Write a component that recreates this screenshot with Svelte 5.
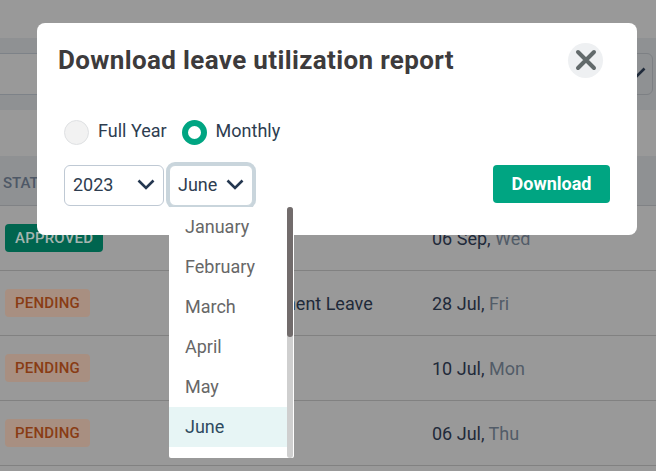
<script>
  const rows = [
    { status: 'APPROVED', cls: 'ok', type: '', date: '06 Sep,', day: 'Wed' },
    { status: 'PENDING', cls: 'wait', type: 'Bereavement Leave', date: '28 Jul,', day: 'Fri' },
    { status: 'PENDING', cls: 'wait', type: '', date: '10 Jul,', day: 'Mon' },
    { status: 'PENDING', cls: 'wait', type: '', date: '06 Jul,', day: 'Thu' }
  ];
  const months = ['January', 'February', 'March', 'April', 'May', 'June'];
</script>

<div class="page">
  <div class="band">
    <div class="search"></div>
    <div class="filter-select">
      <svg width="18" height="11" viewBox="0 0 18 11"><path d="M1.5 1.5L9 9l7.5-7.5" /></svg>
    </div>
  </div>
  <div class="thead"><span>STATUS</span></div>
  {#each rows as r}
    <div class="row">
      <span class="chip {r.cls}">{r.status}</span>
      <span class="type">{r.type}</span>
      <span class="date">{r.date} <em>{r.day}</em></span>
    </div>
  {/each}
</div>

<div class="modal">
  <div class="head">
    <h2>Download leave utilization report</h2>
    <button class="close" aria-label="Close">
      <svg width="22" height="22" viewBox="0 0 22 22"><path d="M3 3l16 16M19 3L3 19" /></svg>
    </button>
  </div>
  <div class="radios">
    <label class="radio"><span class="dot"></span>Full Year</label>
    <label class="radio"><span class="dot on"></span>Monthly</label>
  </div>
  <div class="controls">
    <div class="select year">
      2023
      <svg width="18" height="11" viewBox="0 0 18 11"><path d="M1.5 1.5L9 9l7.5-7.5" /></svg>
    </div>
    <div class="select month">
      June
      <svg width="18" height="11" viewBox="0 0 18 11"><path d="M1.5 1.5L9 9l7.5-7.5" /></svg>
    </div>
    <button class="download">Download</button>
  </div>
</div>

<div class="menu">
  <ul>
    {#each months as m}
      <li class:sel={m === 'June'}>{m}</li>
    {/each}
  </ul>
  <div class="track"><div class="thumb"></div></div>
</div>

<style>
  :global(body) {
    margin: 0;
    background: #999999;
    overflow: hidden;
    font-family: Roboto, sans-serif;
  }
  .page {
    width: 656px;
    height: 471px;
    overflow: hidden;
    background: #999999;
    padding-top: 38px;
    box-sizing: border-box;
  }
  .band {
    background: #8f9193;
    height: 72px;
    padding: 15px 3px 0 0;
    box-sizing: border-box;
    display: flex;
    justify-content: space-between;
    align-items: flex-start;
  }
  .search {
    width: 300px;
    height: 42px;
    box-sizing: border-box;
    background: #999999;
    border-top: 1px solid #7d8288;
    border-bottom: 1px solid #7d8288;
  }
  .filter-select {
    width: 60px;
    height: 42px;
    border: 1px solid #7d8084;
    border-radius: 6px;
    box-sizing: border-box;
    display: flex;
    align-items: center;
    justify-content: flex-end;
    padding: 0 6px 3px 0;
  }
  .filter-select svg {
    fill: none;
    stroke: #1f2a3a;
    stroke-width: 2.6;
  }
  .thead {
    margin-top: 46px;
    height: 50px;
    background: #8f9193;
    border-bottom: 1px solid #808285;
    box-sizing: border-box;
    display: flex;
    align-items: center;
    padding: 5px 0 0 3px;
    font-size: 15px;
    font-weight: 500;
    color: #4e5866;
  }
  .row {
    height: 65px;
    border-bottom: 1px solid #818181;
    box-sizing: border-box;
    display: grid;
    grid-template-columns: 211px 216px 1fr;
    align-items: center;
    padding-left: 5px;
    font-size: 18px;
    color: #1f2a3a;
  }
  .chip {
    justify-self: start;
    height: 28px;
    border-radius: 4px;
    display: flex;
    align-items: center;
    padding: 0 10px;
    font-size: 15px;
    font-weight: 500;
    letter-spacing: 0.2px;
  }
  .chip.ok {
    background: #00654f;
    color: #a5b5b0;
  }
  .chip.wait {
    background: #a88f81;
    color: #893c14;
  }
  .type {
    white-space: nowrap;
  }
  .date em {
    font-style: normal;
    color: #525c68;
  }
  .modal {
    position: absolute;
    left: 37px;
    top: 23px;
    width: 600px;
    height: 212px;
    background: #fff;
    border-radius: 8px;
    padding: 0 27px;
    box-sizing: border-box;
  }
  .head {
    height: 74px;
    display: flex;
    justify-content: space-between;
    align-items: center;
  }
  h2 {
    margin: 0 0 0 -6px;
    font-size: 26px;
    font-weight: 700;
    color: #3d3b3c;
    letter-spacing: 0.36px;
  }
  .close {
    width: 35px;
    height: 35px;
    border-radius: 50%;
    border: 0;
    background: #eef0f2;
    padding: 0;
    margin-right: 7px;
    display: flex;
    align-items: center;
    justify-content: center;
  }
  .close svg {
    fill: none;
    stroke: #626a6b;
    stroke-width: 4;
    stroke-linecap: round;
  }
  .radios {
    margin-top: 21px;
    display: flex;
    gap: 15px;
    height: 25px;
    align-items: center;
  }
  .radio {
    display: flex;
    align-items: center;
    gap: 9px;
    font-size: 18px;
    color: #2e3d50;
  }
  .dot {
    width: 25px;
    height: 25px;
    margin-top: 4px;
    border-radius: 50%;
    background: #f2f2f2;
    border: 1px solid #dfe1e3;
    box-sizing: border-box;
  }
  .dot.on {
    background: #fff;
    border: 6px solid #00a582;
  }
  .controls {
    margin-top: 22px;
    display: flex;
    align-items: flex-start;
  }
  .select {
    height: 41px;
    box-sizing: border-box;
    border: 1px solid #bfc9d4;
    border-radius: 6px;
    display: flex;
    align-items: center;
    justify-content: space-between;
    font-size: 18px;
    color: #2e3d50;
    background: #fff;
  }
  .select svg {
    fill: none;
    stroke: #243750;
    stroke-width: 2.6;
  }
  .year {
    width: 100px;
    padding: 0 8px 3px 8px;
  }
  .month {
    width: 84px;
    margin-left: 5px;
    padding: 0 8px 3px 8px;
    box-shadow: 0 0 0 3px #c9d5dc;
    border-color: #c9d5dc;
  }
  .download {
    margin-left: auto;
    width: 117px;
    height: 38px;
    padding: 0 0 2px;
    background: #00a582;
    color: #fff;
    border: 0;
    border-radius: 4px;
    font: 700 18px Roboto, sans-serif;
  }
  .menu {
    position: absolute;
    left: 169px;
    top: 207px;
    width: 125px;
    height: 251px;
    background: #fff;
    border-radius: 2px;
    overflow: hidden;
    display: flex;
  }
  ul {
    list-style: none;
    margin: 0;
    padding: 0;
    flex: 1;
  }
  li {
    height: 40px;
    box-sizing: border-box;
    padding: 0 0 2px 16px;
    display: flex;
    align-items: center;
    font-size: 18px;
    color: #676767;
  }
  li.sel {
    background: #e7f5f5;
    color: #2e4a60;
  }
  .track {
    width: 6px;
    margin-right: 1px;
    background: #cfcfcf;
    border-radius: 3px;
  }
  .thumb {
    height: 130px;
    background: #726c6c;
    border-radius: 3px;
  }
</style>
